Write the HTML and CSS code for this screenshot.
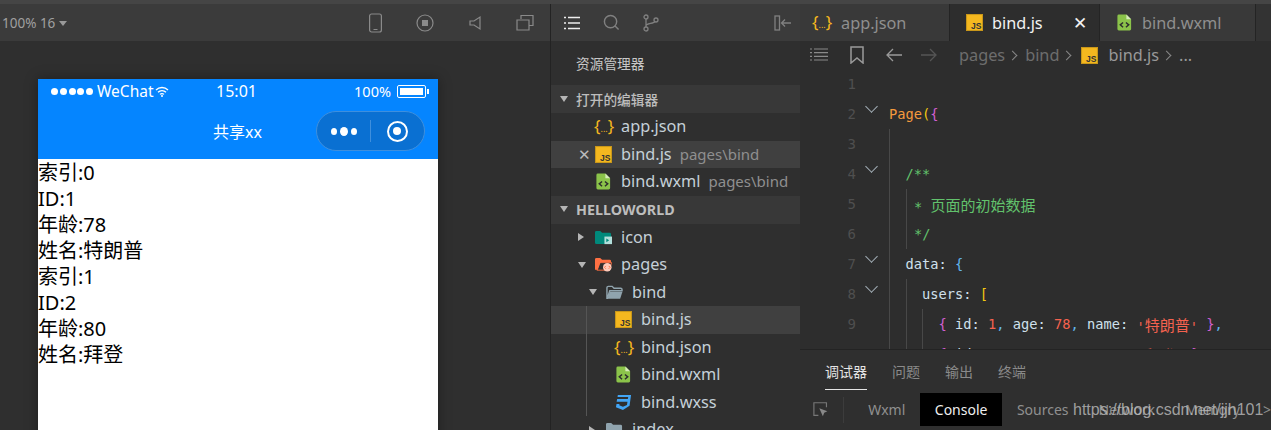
FILE: index.html
```html
<!DOCTYPE html>
<html lang="zh-CN">
<head>
    <meta charset="UTF-8">
    <meta name="viewport" content="width=device-width, initial-scale=1.0">
    <title>微信开发者工具</title>
    <link rel="stylesheet" href="styles.css">
</head>
<body>
    <svg class="defs" width="0" height="0">
        <symbol id="ic-js" viewBox="0 0 16 16">
            <rect x="0.5" y="0.5" width="15" height="15" fill="#f5b81f" stroke="#c9971a"/>
            <text x="14.5" y="14" text-anchor="end" font-family="Liberation Sans" font-weight="bold" font-size="8" fill="#333">JS</text>
        </symbol>
        <symbol id="ic-wxml" viewBox="0 0 16 18">
            <path d="M2 0.5h8l5 5v10.5a1.5 1.5 0 0 1-1.5 1.5h-11.500a1.500 1.500 0 0 1-1.500-1.500v-14a1.500 1.500 0 0 1 1.500-1.500z" fill="#8bc34a"/>
            <path d="M10 0.500v5h5z" fill="#d7ecbb"/>
            <path d="M6.500 9l-3 2.500 3 2.500M9.500 9l3 2.500-3 2.500" fill="none" stroke="#2d2d2d" stroke-width="1.500"/>
        </symbol>
        <symbol id="ic-wxss" viewBox="0 0 18 18">
            <path d="M3 1h14l-1.600 11.500-7 4.500-7.400-3 .6-3.500h3.200l-.3 1.500 3.900 1.500 4.300-1.800.5-3.400h-11.500l.6-3h11.300l.4-2h-11.300z" fill="#42a5f5"/>
        </symbol>
        <symbol id="ic-folder" viewBox="0 0 18 16">
            <path d="M1 3a1.500 1.500 0 0 1 1.500-1.500h4l2 2h7a1.500 1.500 0 0 1 1.500 1.500v1h-13l-2.500 8h-.5z" fill="none" stroke="#90a4ae" stroke-width="1.500"/>
            <path d="M4 7h13.500l-2.500 7.500h-13.500z" fill="#90a4ae"/>
        </symbol>
    </svg>

    <div class="top-strip"></div>
    <div class="workbench">
        <section class="simulator">
            <div class="sim-toolbar">
                <span class="zoom-label">100% 16 <i class="caret"></i></span>
                <div class="sim-tools">
                    <svg width="13" height="20" viewBox="0 0 13 20"><rect x="0.600" y="1" width="11.800" height="18" rx="2" fill="none" stroke="#8a8a8a" stroke-width="1.200"/><path d="M4.500 16.500h4" stroke="#8a8a8a"/></svg>
                    <svg width="18" height="18" viewBox="0 0 18 18"><circle cx="9" cy="9" r="8" fill="none" stroke="#8a8a8a" stroke-width="1.200"/><rect x="6" y="6" width="6" height="6" fill="#8a8a8a"/></svg>
                    <svg width="14" height="16" viewBox="0 0 14 16"><path d="M12 2v12l-6-4h-4v-4h4z" fill="none" stroke="#8a8a8a" stroke-width="1.200"/></svg>
                    <svg width="18" height="18" viewBox="0 0 18 18"><path d="M5 5v-3.500h12v10h-4M1 6h12v10h-12z" fill="none" stroke="#8a8a8a" stroke-width="1.200"/></svg>
                </div>
            </div>
            <div class="phone">
                <div class="phone-head">
                    <div class="status-bar">
                        <div class="status-left">
                            <span class="signal"><i></i><i></i><i></i><i></i><i></i></span>
                            <span>WeChat</span>
                            <svg width="14" height="11" viewBox="0 0 14 11"><path d="M1 4a8.500 8.500 0 0 1 12 0M3 6.300a5.500 5.500 0 0 1 8 0M5 8.400a2.800 2.800 0 0 1 4 0" fill="none" stroke="#fff" stroke-width="1.300"/><circle cx="7" cy="10" r="1" fill="#fff"/></svg>
                        </div>
                        <span class="status-time">15:01</span>
                        <div class="status-right">
                            <span>100%</span>
                            <span class="battery"><i></i></span>
                        </div>
                    </div>
                    <div class="nav-bar">
                        <span class="nav-title">共享xx</span>
                        <div class="capsule">
                            <span class="capsule-dots"><i></i><i class="big"></i><i></i></span>
                            <span class="capsule-line"></span>
                            <span class="capsule-ring"></span>
                        </div>
                    </div>
                </div>
                <div class="phone-body">
                    <div>索引:0</div>
                    <div>ID:1</div>
                    <div>年龄:78</div>
                    <div>姓名:特朗普</div>
                    <div>索引:1</div>
                    <div>ID:2</div>
                    <div>年龄:80</div>
                    <div>姓名:拜登</div>
                </div>
            </div>
        </section>

        <section class="explorer">
            <div class="side-toolbar">
                <svg width="16" height="14" viewBox="0 0 16 14"><path d="M4 1.500h12M4 7h12M4 12.500h12M0 1.500h2M0 7h2M0 12.500h2" stroke="#eee" stroke-width="1.500"/></svg>
                <svg width="17" height="17" viewBox="0 0 18 18"><circle cx="8" cy="8" r="6.500" fill="none" stroke="#808080" stroke-width="1.500"/><path d="M12.500 12.500l4 4" stroke="#808080" stroke-width="1.500"/></svg>
                <svg width="16" height="18" viewBox="0 0 16 18"><g fill="none" stroke="#808080" stroke-width="1.300"><circle cx="3" cy="3" r="2"/><circle cx="3" cy="15" r="2"/><circle cx="13" cy="6" r="2"/><path d="M3 5v8M3 12c0-3 8-2 9-4.500"/></g></svg>
                <svg class="collapse" width="18" height="16" viewBox="0 0 18 16"><rect x="1" y="1" width="4.500" height="14" fill="none" stroke="#808080" stroke-width="1.300"/><path d="M17 8h-9M11 4.500l-3.500 3.500 3.500 3.500" fill="none" stroke="#808080" stroke-width="1.300"/></svg>
            </div>
            <div class="explorer-title">资源管理器</div>

            <div class="section-head"><i class="arrow down"></i><span>打开的编辑器</span></div>
            <div class="row">
                <span class="slot"></span>
                <span class="json-icon">{<small>...</small>}</span>
                <span class="name">app.json</span>
            </div>
            <div class="row selected">
                <span class="slot close">✕</span>
                <svg class="file-icon" viewBox="0 0 16 16"><use href="#ic-js"/></svg>
                <span class="name">bind.js</span><span class="path">pages\bind</span>
            </div>
            <div class="row">
                <span class="slot"></span>
                <svg class="file-icon" viewBox="0 0 16 18"><use href="#ic-wxml"/></svg>
                <span class="name">bind.wxml</span><span class="path">pages\bind</span>
            </div>

            <div class="section-head"><i class="arrow down"></i><b>HELLOWORLD</b></div>
            <div class="row">
                <span class="slot"><i class="arrow right"></i></span>
                <svg class="file-icon" viewBox="0 0 18 16"><path d="M0 2.500a1.500 1.500 0 0 1 1.500-1.500h4l2 2h8a1.500 1.500 0 0 1 1.500 1.500v9a1.500 1.500 0 0 1-1.500 1.500h-14a1.500 1.500 0 0 1-1.500-1.500z" fill="#00897b"/><rect x="10" y="7" width="8" height="8" fill="#b2dfdb"/><path d="M12 9l3 2-3 2z" fill="#00897b"/></svg>
                <span class="name">icon</span>
            </div>
            <div class="row">
                <span class="slot"><i class="arrow down"></i></span>
                <svg class="file-icon" viewBox="0 0 18 16"><path d="M0 2.500a1.500 1.500 0 0 1 1.500-1.500h4l2 2h8a1.500 1.500 0 0 1 1.500 1.500v1h-11l-3 8h-3z" fill="#ff7043"/><path d="M2 14l2.500-8h13l-2 8z" fill="none" stroke="#ff7043"/><circle cx="13" cy="11" r="4.500" fill="#ffccbc"/><path d="M11.500 9.500l-1.500 1.500 1.500 1.500M14.500 9.500l1.500 1.500-1.500 1.500" fill="none" stroke="#ff7043"/></svg>
                <span class="name">pages</span>
            </div>
            <div class="row depth-2">
                <span class="slot"><i class="arrow down"></i></span>
                <svg class="file-icon" viewBox="0 0 18 16"><use href="#ic-folder"/></svg>
                <span class="name">bind</span>
            </div>
            <div class="tree-group">
                <div class="row depth-3 selected">
                    <span class="slot"></span>
                    <svg class="file-icon" viewBox="0 0 16 16"><use href="#ic-js"/></svg>
                    <span class="name">bind.js</span>
                </div>
                <div class="row depth-3">
                    <span class="slot"></span>
                    <span class="json-icon">{<small>...</small>}</span>
                    <span class="name">bind.json</span>
                </div>
                <div class="row depth-3">
                    <span class="slot"></span>
                    <svg class="file-icon" viewBox="0 0 16 18"><use href="#ic-wxml"/></svg>
                    <span class="name">bind.wxml</span>
                </div>
                <div class="row depth-3">
                    <span class="slot"></span>
                    <svg class="file-icon" viewBox="0 0 18 18"><use href="#ic-wxss"/></svg>
                    <span class="name">bind.wxss</span>
                </div>
            </div>
            <div class="row depth-2">
                <span class="slot"><i class="arrow right"></i></span>
                <svg class="file-icon" viewBox="0 0 18 16"><path d="M0 2.500a1.500 1.500 0 0 1 1.500-1.500h4l2 2h8a1.500 1.500 0 0 1 1.500 1.500v9a1.500 1.500 0 0 1-1.500 1.500h-14a1.500 1.500 0 0 1-1.500-1.500z" fill="#90a4ae"/></svg>
                <span class="name">index</span>
            </div>
        </section>

        <section class="editor">
            <div class="tabs">
                <div class="tab">
                    <span class="json-icon">{<small>...</small>}</span>
                    <span>app.json</span>
                </div>
                <div class="tab active">
                    <svg class="file-icon" viewBox="0 0 16 16"><use href="#ic-js"/></svg>
                    <span>bind.js</span>
                    <span class="tab-close">✕</span>
                </div>
                <div class="tab">
                    <svg class="file-icon" viewBox="0 0 16 18"><use href="#ic-wxml"/></svg>
                    <span>bind.wxml</span>
                </div>
            </div>
            <div class="crumbs">
                <svg width="18" height="14" viewBox="0 0 18 14"><path d="M4 1h14M4 4.700h14M4 8.300h14M4 12h14M0 1h2M0 4.700h2M0 8.300h2M0 12h2" stroke="#8a8a8a" stroke-width="1.200"/></svg>
                <svg class="mark" width="14" height="18" viewBox="0 0 14 18"><path d="M1 1h12v16l-6-5-6 5z" fill="none" stroke="#9a9a9a" stroke-width="1.500"/></svg>
                <svg class="nav-arrow" width="16" height="14" viewBox="0 0 16 14"><path d="M16 7h-14M7 1l-6 6 6 6" fill="none" stroke="#9a9a9a" stroke-width="1.300"/></svg>
                <svg class="nav-arrow last" width="16" height="14" viewBox="0 0 16 14"><path d="M0 7h14M9 1l6 6-6 6" fill="none" stroke="#555" stroke-width="1.300"/></svg>
                <span class="crumb dim">pages</span><i class="sep"></i>
                <span class="crumb dim">bind</span><i class="sep"></i>
                <svg class="file-icon" viewBox="0 0 16 16"><use href="#ic-js"/></svg>
                <span class="crumb">bind.js</span><i class="sep"></i>
                <span class="crumb">...</span>
            </div>
            <div class="code">
                <div class="line"><span class="num">1</span><span class="fold"></span></div>
                <div class="line"><span class="num">2</span><span class="fold"><i class="chev"></i></span><span class="orange">Page</span><span class="yellow">(</span><span class="pink">{</span></div>
                <div class="line"><span class="num">3</span><span class="fold"></span><i class="guide"></i></div>
                <div class="line"><span class="num">4</span><span class="fold"><i class="chev"></i></span><i class="guide"></i><span class="green">/**</span></div>
                <div class="line"><span class="num">5</span><span class="fold"></span><i class="guide"></i><i class="guide half"></i><span class="green">*&nbsp;<span class="cjk">页面的初始数据</span></span></div>
                <div class="line"><span class="num">6</span><span class="fold"></span><i class="guide"></i><i class="guide half"></i><span class="green">*/</span></div>
                <div class="line"><span class="num">7</span><span class="fold"><i class="chev"></i></span><i class="guide"></i><span class="plain">data:</span>&nbsp;<span class="blue">{</span></div>
                <div class="line"><span class="num">8</span><span class="fold"><i class="chev"></i></span><i class="guide"></i><i class="guide"></i><span class="plain">users:</span>&nbsp;<span class="yellow">[</span></div>
                <div class="line"><span class="num">9</span><span class="fold"></span><i class="guide"></i><i class="guide"></i><i class="guide"></i><span class="pink">{</span>&nbsp;<span class="plain">id:</span>&nbsp;<span class="red">1</span><span class="blue">,</span>&nbsp;<span class="plain">age:</span>&nbsp;<span class="red">78</span><span class="blue">,</span>&nbsp;<span class="plain">name:</span>&nbsp;<span class="red">'<span class="cjk">特朗普</span>'</span>&nbsp;<span class="pink">}</span><span class="blue">,</span></div>
                <div class="line"><span class="num">10</span><span class="fold"></span><i class="guide"></i><i class="guide"></i><i class="guide"></i><span class="pink">{</span>&nbsp;<span class="plain">id:</span>&nbsp;<span class="red">2</span><span class="blue">,</span>&nbsp;<span class="plain">age:</span>&nbsp;<span class="red">80</span><span class="blue">,</span>&nbsp;<span class="plain">name:</span>&nbsp;<span class="red">'<span class="cjk">拜登</span>'</span>&nbsp;<span class="pink">}</span></div>
            </div>
            <div class="panel">
                <div class="panel-tabs">
                    <span class="panel-tab current">调试器</span>
                    <span class="panel-tab">问题</span>
                    <span class="panel-tab">输出</span>
                    <span class="panel-tab">终端</span>
                </div>
                <div class="devtools">
                    <svg width="17" height="17" viewBox="0 0 17 17"><path d="M6 15h-5v-14h14v5" fill="none" stroke="#777" stroke-width="1.300"/><path d="M7 7l9 3.500-3.500 1.500-1.500 4z" fill="#888"/></svg>
                    <i class="dev-sep"></i>
                    <span class="dev-tab">Wxml</span>
                    <span class="dev-tab on">Console</span>
                    <span class="dev-tab">Sources</span>
                    <span class="dev-tab">Network</span>
                    <span class="dev-tab">Memory</span>
                    <span class="dev-more">&gt;</span>
                </div>
                <div class="watermark">https://blog.csdn.net/jjh101</div>
            </div>
        </section>
    </div>
</body>
</html>
```

FILE: styles.css
```css
* {
    box-sizing: border-box;
}
html, body {
    margin: 0;
    height: 430px;
    overflow: hidden;
}
body {
    background: #2f2f2f;
    font-family: "Noto Sans", "Noto Sans CJK SC", sans-serif;
}
i {
    font-style: normal;
}
.defs {
    position: absolute;
}
.top-strip {
    height: 4px;
    background: #454545;
}
.workbench {
    display: flex;
    height: 426px;
}

/* simulator */
.simulator {
    width: 551px;
    border-right: 1px solid #232323;
    background: #2f2f2f;
    overflow: hidden;
}
.sim-toolbar {
    height: 37px;
    background: #3b3b3b;
    display: flex;
    align-items: center;
    justify-content: space-between;
    padding: 0 16px 0 2px;
}
.zoom-label {
    color: #a0a0a0;
    font-size: 13.500px;
}
.caret {
    display: inline-block;
    border: 4px solid transparent;
    border-top: 5px solid #999;
    border-bottom: 0;
    vertical-align: 2px;
}
.sim-tools {
    display: flex;
    align-items: center;
    gap: 34px;
}
.phone {
    width: 400px;
    height: 400px;
    margin: 38px 0 0 38px;
    background: #fff;
    box-shadow: 0 0 12px rgba(0,0,0,0.35);
}
.phone-head {
    background: #0585ff;
    color: #fff;
    height: 80px;
}
.status-bar {
    height: 24px;
    display: grid;
    grid-template-columns: 1fr auto 1fr;
    align-items: center;
    padding: 0 12px 0 9px;
    font-size: 15.500px;
}
.status-left, .status-right {
    display: flex;
    align-items: center;
    gap: 4px;
}
.status-left {
    padding-left: 4px;
}
.status-left svg {
    margin-left: -3px;
}
.status-right {
    justify-content: flex-end;
    gap: 6px;
    font-size: 14.500px;
}
.status-time {
    font-size: 16px;
}
.signal {
    display: flex;
    gap: 1.750px;
}
.signal i {
    width: 7px;
    height: 7px;
    border-radius: 50%;
    background: #fff;
}
.battery {
    width: 29px;
    height: 13px;
    border: 1px solid #fff;
    border-radius: 2px;
    padding: 2px;
    display: flex;
    position: relative;
}
.battery i {
    flex: 1;
    background: #fff;
}
.battery::after {
    content: "";
    position: absolute;
    right: -4px;
    top: 3px;
    width: 2px;
    height: 5px;
    background: #fff;
}
.nav-bar {
    height: 56px;
    display: flex;
    align-items: center;
    justify-content: space-between;
    padding: 0 13px 0 175px;
}
.nav-title {
    font-size: 16px;
}
.capsule {
    width: 109px;
    height: 40px;
    border-radius: 20px;
    background: #0a70d2;
    border: 1px solid #3f8fdd;
    display: flex;
    align-items: center;
    padding-left: 14px;
}
.capsule-dots {
    display: flex;
    align-items: center;
    gap: 3px;
    width: 39px;
}
.capsule-dots i {
    width: 6px;
    height: 7px;
    border-radius: 50%;
    background: #fff;
}
.capsule-dots i.big {
    width: 8px;
    height: 9px;
}
.capsule-line {
    width: 1px;
    height: 22px;
    background: #3f8fdd;
}
.capsule-ring {
    width: 21px;
    height: 21px;
    border: 2.500px solid #fff;
    border-radius: 50%;
    margin-left: 16px;
    position: relative;
}
.capsule-ring::after {
    content: "";
    position: absolute;
    left: 4px;
    top: 4px;
    width: 8px;
    height: 8px;
    border-radius: 50%;
    background: #fff;
}
.phone-body {
    font-size: 20px;
    line-height: 26px;
    color: #000;
    padding-top: 1px;
}

/* explorer */
.explorer {
    width: 249px;
    background: #2f2f2f;
    overflow: hidden;
    flex-shrink: 0;
}
.side-toolbar {
    height: 37px;
    background: #3b3b3b;
    display: flex;
    align-items: center;
    gap: 23px;
    padding: 0 8px 0 13px;
}
.side-toolbar .collapse {
    margin-left: auto;
}
.explorer-title {
    height: 44px;
    line-height: 46px;
    padding-left: 25px;
    font-size: 13.700px;
    color: #c8c8c8;
}
.section-head {
    height: 28px;
    background: #383838;
    display: flex;
    align-items: center;
    padding: 0 0 1px 9px;
    font-size: 13.700px;
    font-weight: 500;
    color: #bdbdbd;
}
.section-head .arrow {
    margin-right: 8px;
}
.section-head b {
    font-weight: 700;
    font-size: 14.300px;
}
.arrow {
    display: inline-block;
    width: 0;
    height: 0;
    border: 4px solid transparent;
}
.arrow.down {
    border-top: 6px solid #b5b5b5;
    border-bottom: 0;
    border-left-width: 4.500px;
    border-right-width: 4.500px;
}
.arrow.right {
    border-left: 6px solid #b5b5b5;
    border-right: 0;
}
.row {
    height: 27.500px;
    display: flex;
    align-items: center;
    padding-left: 27px;
    color: #c5d0d8;
    font-size: 16.300px;
    white-space: nowrap;
}
.row.selected {
    background: #404040;
}
.row.depth-2 {
    padding-left: 38px;
}
.row.depth-3 {
    padding-left: 47px;
}
.name {
    margin-top: -1px;
}
.tree-group {
    position: relative;
}
.tree-group::before {
    content: "";
    position: absolute;
    left: 35px;
    top: 0;
    width: 1px;
    height: 100%;
    background: #555;
}
.slot {
    width: 17px;
    flex-shrink: 0;
    display: flex;
    align-items: center;
    color: #bbb;
}
.slot.close {
    font-size: 15px;
}
.file-icon {
    width: 17px;
    height: 17px;
    margin-right: 9px;
    flex-shrink: 0;
}
.json-icon {
    width: 20px;
    margin: -2px 7px 0 -1px;
    color: #f5b81f;
    font-size: 17px;
    text-align: center;
    flex-shrink: 0;
    white-space: nowrap;
}
.json-icon small {
    font-size: 9px;
}
.path {
    margin: -1px 0 0 8px;
    font-size: 15px;
    color: #8f8f8f;
}

/* editor */
.editor {
    flex: 1;
    min-width: 0;
    background: #2d2d2d;
    display: flex;
    flex-direction: column;
    overflow: hidden;
    position: relative;
}
.tabs {
    height: 37px;
    display: flex;
    background: #333;
    flex-shrink: 0;
}
.tab {
    width: 150px;
    display: flex;
    align-items: center;
    padding-left: 13px;
    background: #393939;
    border-right: 1px solid #242424;
    color: #8f8f8f;
    font-size: 16.300px;
}
.tab:nth-child(2) {
    padding-left: 16px;
}
.tab:nth-child(3) {
    width: 156px;
    padding-left: 16px;
}
.tab .json-icon {
    margin-right: 9px;
}
.tab.active {
    background: #2d2d2d;
    color: #f2f2f2;
}
.tab-close {
    margin-left: auto;
    margin-right: 12px;
    font-size: 17px;
}
.crumbs {
    height: 28px;
    display: flex;
    align-items: center;
    padding-left: 10px;
    font-size: 16.300px;
    color: #999;
    flex-shrink: 0;
}
.crumbs .mark {
    margin: 0 22px;
}
.crumbs .nav-arrow {
    margin-right: 19px;
}
.crumbs .nav-arrow.last {
    margin-right: 22px;
}
.crumbs .file-icon {
    margin: 0 10px 0 2px;
}
.crumb.dim {
    color: #6d6d6d;
}
.sep {
    width: 7px;
    height: 7px;
    border-top: 1.300px solid #888;
    border-right: 1.300px solid #888;
    transform: rotate(45deg);
    margin: 0 9px 0 4px;
}
.code {
    flex: 1;
    min-height: 0;
    overflow: hidden;
    font-family: "DejaVu Sans Mono", "Noto Sans CJK SC", monospace;
    font-size: 13.700px;
    color: #d4d4d4;
}
.cjk {
    font-family: "Noto Sans CJK SC", sans-serif;
    font-size: 15px;
    vertical-align: 1px;
}
.line {
    height: 30px;
    display: flex;
    align-items: center;
    white-space: nowrap;
}
.num {
    width: 56px;
    text-align: right;
    color: #4f4f4f;
    font-size: 14px;
    flex-shrink: 0;
}
.fold {
    width: 33px;
    flex-shrink: 0;
    padding-left: 11px;
    align-self: flex-start;
    padding-top: 3px;
}
.chev {
    display: block;
    width: 9px;
    height: 9px;
    border-right: 1.300px solid #a5b1ba;
    border-bottom: 1.300px solid #a5b1ba;
    transform: rotate(45deg);
}
.guide {
    width: 16.500px;
    height: 30px;
    border-left: 1px solid #484848;
    flex-shrink: 0;
}
.guide.half {
    width: 8.500px;
}
.orange { color: #f59a3d; }
.yellow { color: #f2c811; }
.pink { color: #d05fd0; }
.green { color: #62c26c; }
.blue { color: #62b6ee; }
.red { color: #f5624f; }
.plain { color: #cfe0ec; }

/* panel */
.panel {
    height: 81px;
    flex-shrink: 0;
    background: #2f2f2f;
    border-top: 1px solid #232323;
    position: relative;
}
.panel-tabs {
    height: 40px;
    display: flex;
    align-items: flex-start;
    gap: 25px;
    padding: 12px 0 0 25px;
    font-size: 14px;
    color: #8a8a8a;
}
.panel-tab {
    height: 28px;
    line-height: 20px;
}
.panel-tab.current {
    color: #e5e5e5;
    border-bottom: 1px solid #e5e5e5;
}
.devtools {
    height: 33px;
    margin-top: 3px;
    display: flex;
    align-items: center;
    padding-left: 13px;
    font-size: 14px;
    color: #8f8f8f;
    white-space: nowrap;
}
.dev-sep {
    width: 1px;
    height: 26px;
    background: #3c3c3c;
    margin: 0 9px 0 15px;
}
.dev-tab {
    padding: 0 15px;
}
.dev-tab.on {
    background: #000;
    color: #eee;
    height: 33px;
    line-height: 33px;
    padding: 0 14.500px;
}
.dev-more {
    margin-left: 8px;
}
.watermark {
    position: absolute;
    left: 273px;
    top: 51px;
    font-family: "Liberation Sans", sans-serif;
    font-size: 16px;
    color: rgba(190,190,190,0.8);
    white-space: nowrap;
}
```
